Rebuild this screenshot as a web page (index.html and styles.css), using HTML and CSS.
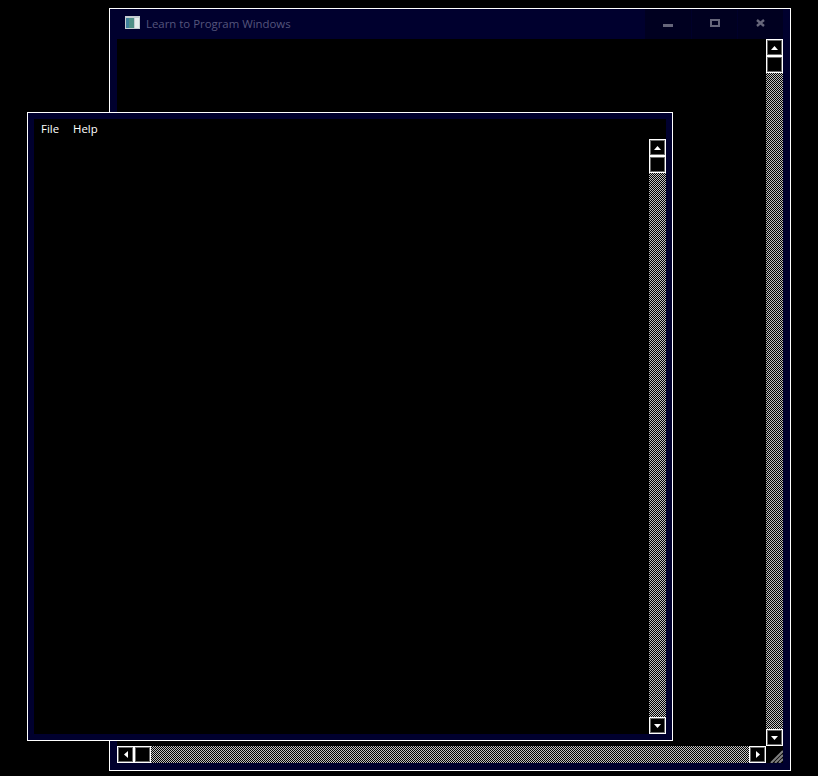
FILE: index.html
```html
<!DOCTYPE html>
<html lang="en">
<head>
  <meta charset="UTF-8" />
  <title>Learn to Program Windows</title>
  <link rel="stylesheet" href="styles.css">
</head>
<body>

  <!-- shared checker for the scrollbar tracks -->
  <svg class="defs" width="0" height="0">
    <defs>
      <pattern id="checker" width="2" height="2" patternUnits="userSpaceOnUse">
        <rect width="2" height="2" fill="#000"/>
        <rect x="0" y="0" width="1" height="1" fill="#c0c0c0"/>
        <rect x="1" y="1" width="1" height="1" fill="#c0c0c0"/>
      </pattern>
    </defs>
  </svg>

  <!-- back window -->
  <div class="window window-back">
    <div class="titlebar">
      <svg class="app-icon" width="15" height="13" viewBox="0 0 15 13">
        <rect width="15" height="13" fill="#c4ccd0"/>
        <rect x="1" y="2" width="8" height="10" fill="#4f8f86"/>
        <rect x="1" y="2" width="3" height="10" fill="#3f7f9a"/>
        <rect x="10" y="2" width="4" height="10" fill="#e4ecec"/>
      </svg>
      <span class="title">Learn to Program Windows</span>
      <div class="caption-buttons">
        <div class="caption-btn">
          <svg width="10" height="10" viewBox="0 0 10 10"><rect x="0" y="5" width="10" height="3" fill="#66667a"/></svg>
        </div>
        <div class="caption-btn caption-max">
          <svg width="10" height="10" viewBox="0 0 10 10"><rect x="1" y="1" width="8" height="6" fill="none" stroke="#66667a" stroke-width="2"/></svg>
        </div>
        <div class="caption-btn caption-close">
          <svg width="10" height="10" viewBox="0 0 10 10"><path d="M2 1 L9 7 M9 1 L2 7" fill="none" stroke="#66667a" stroke-width="2.4"/></svg>
        </div>
      </div>
    </div>
    <div class="client client-back">
      <div class="view"></div>
      <div class="vscroll">
        <div class="sb-btn"><svg width="7" height="4" viewBox="0 0 7 4"><path d="M3.5 0 L7 4 H0 Z" fill="#fff"/></svg></div>
        <div class="sb-btn"></div>
        <svg class="track"><rect width="100%" height="100%" fill="url(#checker)"/></svg>
        <div class="sb-btn"><svg width="7" height="4" viewBox="0 0 7 4"><path d="M0 0 H7 L3.5 4 Z" fill="#fff"/></svg></div>
      </div>
      <div class="hscroll">
        <div class="sb-btn"><svg width="4" height="7" viewBox="0 0 4 7"><path d="M4 0 V7 L0 3.5 Z" fill="#fff"/></svg></div>
        <div class="sb-btn"></div>
        <svg class="track"><rect width="100%" height="100%" fill="url(#checker)"/></svg>
        <div class="sb-btn"><svg width="4" height="7" viewBox="0 0 4 7"><path d="M0 0 L4 3.5 L0 7 Z" fill="#fff"/></svg></div>
      </div>
      <div class="grip">
        <svg width="17" height="17" viewBox="0 0 17 17">
          <path d="M5 17 L17 5 M9 17 L17 9 M13 17 L17 13" stroke="#808080" stroke-width="2" fill="none"/>
        </svg>
      </div>
    </div>
  </div>

  <!-- front window -->
  <div class="window window-front">
    <div class="menubar">
      <span class="menu-item">File</span>
      <span class="menu-item">Help</span>
    </div>
    <div class="client client-front">
      <div class="view"></div>
      <div class="vscroll">
        <div class="sb-btn"><svg width="7" height="4" viewBox="0 0 7 4"><path d="M3.5 0 L7 4 H0 Z" fill="#fff"/></svg></div>
        <div class="sb-btn"></div>
        <svg class="track"><rect width="100%" height="100%" fill="url(#checker)"/></svg>
        <div class="sb-btn"><svg width="7" height="4" viewBox="0 0 7 4"><path d="M0 0 H7 L3.5 4 Z" fill="#fff"/></svg></div>
      </div>
    </div>
  </div>

</body>
</html>
```

FILE: styles.css
```css
html, body {
  margin: 0;
  height: 100%;
  background: #000;
  overflow: hidden;
}

body {
  position: relative;
  font-family: "Open Sans", sans-serif;
  font-size: 11.4px;
}

.defs {
  position: absolute;
}

/* windows sit on a free desktop */
.window {
  position: absolute;
  box-sizing: border-box;
  display: flex;
  flex-direction: column;
  border: 1px solid #fff;
  background: #00002e;
}

.window-back {
  left: 109px;
  top: 8px;
  width: 682px;
  height: 763px;
  padding: 0 7px 7px;
}

.window-front {
  left: 27px;
  top: 112px;
  width: 646px;
  height: 629px;
  padding: 6px 6px 6px;
}

.titlebar {
  display: flex;
  align-items: center;
  height: 30px;
  flex-shrink: 0;
  padding-left: 8px;
}

.app-icon {
  flex-shrink: 0;
  margin-right: 6px;
  margin-bottom: 3px;
}

.title {
  color: #55557c;
  flex: 1;
  padding-bottom: 2px;
}

.caption-buttons {
  display: flex;
  height: 100%;
}

.caption-btn {
  display: flex;
  align-items: center;
  justify-content: center;
  width: 46px;
  background: #000020;
}

.caption-btn + .caption-btn {
  box-sizing: border-box;
  border-left: 1px solid #00002a;
}

.caption-max svg {
  margin-left: 1px;
}

.caption-close svg {
  margin-right: 1px;
}

.menubar {
  display: flex;
  align-items: center;
  height: 20px;
  flex-shrink: 0;
  padding-bottom: 2px;
  box-sizing: border-box;
  background: #000;
  color: #fff;
}

.menu-item {
  padding: 0 7px;
}

.client {
  flex: 1;
  display: grid;
  min-height: 0;
  background: #000;
}

.client-back {
  grid-template-columns: 1fr 17px;
  grid-template-rows: 1fr 17px;
}

.client-front {
  grid-template-columns: 1fr 17px;
  grid-template-rows: 1fr;
}

.vscroll {
  display: flex;
  flex-direction: column;
  min-height: 0;
}

.hscroll {
  display: flex;
  min-width: 0;
}

.track {
  flex: 1;
  display: block;
  min-width: 0;
  min-height: 0;
  shape-rendering: crispEdges;
}

.sb-btn {
  box-sizing: border-box;
  display: flex;
  align-items: center;
  justify-content: center;
  width: 17px;
  height: 17px;
  flex-shrink: 0;
  background: #000;
  border: 1px solid #fff;
  box-shadow: inset 0 0 0 1px #6a6a6a;
}

.grip {
  height: 17px;
}

.grip svg {
  display: block;
}
```
